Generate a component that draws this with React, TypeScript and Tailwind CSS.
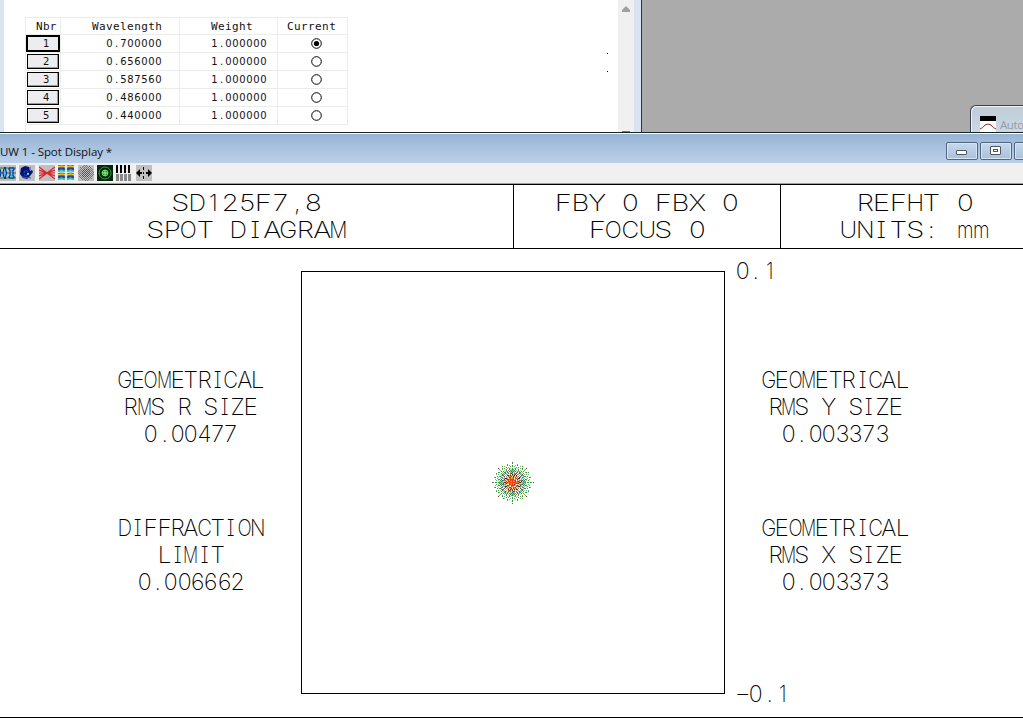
import { ReactNode } from "react";

const wavelengths = ["0.700000", "0.656000", "0.587560", "0.486000", "0.440000"];

// Horizontal stretch of the plotter letters, so that they fill equal cells
const stretchOf = (char: string) => {
  if ("MW".includes(char)) return 0.68;
  if (char === "m") return 0.64;
  if ("OQ".includes(char)) return 0.76;
  if ("NGCDHU".includes(char)) return 0.82;
  if ("1.,:I".includes(char)) return 0.8;
  if (char === "-") return 1.5;
  if ("LEFS".includes(char)) return 0.98;
  return 0.93;
};

type CellsProps = { text: string; cell: string; stretch?: number };

const Cells = ({ text, cell, stretch }: CellsProps) => (
  <span className="inline-flex whitespace-pre">
    {text.split("").map((char, i) => (
      <span
        key={i}
        className={`flex justify-center shrink-0 ${cell}`}
        style={stretch ? { transform: `scaleX(${stretch * stretchOf(char)})` } : undefined}
      >
        {char}
      </span>
    ))}
  </span>
);

const HeaderText = ({ lines }: { lines: string[] }) => (
  <div className="flex flex-col items-center pt-1">
    {lines.map((line) => (
      <div key={line} className="h-[27px] leading-[27px]">
        <Cells text={line} cell="w-[16.7px]" stretch={1.32} />
      </div>
    ))}
  </div>
);

const Block = ({ lines }: { lines: string[] }) => (
  <div className="flex flex-col items-center">
    {lines.map((line) => (
      <div key={line} className="h-[27px] leading-[27px]">
        <Cells text={line} cell="w-[13.35px]" stretch={1.1} />
      </div>
    ))}
  </div>
);

const Radio = ({ checked }: { checked: boolean }) => (
  <svg width="11" height="11" viewBox="0 0 11 11">
    <circle cx="5.5" cy="5.5" r="4.8" fill="#fff" stroke="#000" />
    {checked && <circle cx="5.5" cy="5.5" r="2.6" />}
  </svg>
);

const WavelengthTable = () => (
  <div className="w-[323px] border-t border-l border-[#e9eeeb] font-['DejaVu_Sans_Mono',monospace] text-[11px] text-[#111]">
    <div className="flex h-[17px] leading-[18px] border-b border-[#e9eeeb] [&>div]:border-r [&>div]:border-[#e9eeeb]">
      <div className="w-[35px] pl-[10px] tracking-[0.3px]">Nbr</div>
      <div className="w-[119px] pl-[31px] tracking-[0.4px]">Wavelength</div>
      <div className="w-[98px] pl-[31px] tracking-[0.4px]">Weight</div>
      <div className="w-[70px] pl-[9px] tracking-[0.4px]">Current</div>
    </div>
    {wavelengths.map((value, i) => (
      <div
        key={value}
        className="flex h-[18px] leading-[18px] font-['DejaVu_Sans',sans-serif] text-[10px] border-b border-[#e9eeeb] [&>div]:border-r [&>div]:border-[#e9eeeb]"
      >
        <div className="w-[35px] flex items-center justify-center">
          <span
            className={`shrink-0 border-black bg-[#ededf0] ${
              i === 0
                ? "w-[34px] h-[17px] leading-[14px] pl-[15px] border-2"
                : "w-8 h-[15px] leading-[14px] pl-[15px] border shadow-[inset_-1px_-1px_0_#999]"
            }`}
          >
            {i + 1}
          </span>
        </div>
        <div className="w-[119px] flex justify-end pr-[17px]">
          <Cells text={value} cell="w-[7px]" />
        </div>
        <div className="w-[98px] flex justify-end pr-[10px]">
          <Cells text="1.000000" cell="w-[7px]" />
        </div>
        <div className="w-[70px] flex items-center justify-center pl-2">
          <Radio checked={i === 0} />
        </div>
      </div>
    ))}
  </div>
);

const Icon = ({ children, bg = "#c0c0c0" }: { children: ReactNode; bg?: string }) => (
  <svg width="16" height="16" viewBox="0 0 16 16" className="shrink-0">
    <rect width="16" height="16" fill={bg} />
    {children}
  </svg>
);

const dots: [number, number][] = [];
for (let y = 0; y < 16; y += 1) {
  for (let x = y % 2; x < 16; x += 2) {
    if (Math.hypot(x - 7.5, y - 7.5) < 7.8) dots.push([x, y]);
  }
}

const fringes = ["#2f8f46", "#e7d72d", "#d9621f", "#1e3ba0", "#1e3ba0", "#38b2be", "#38b2be", "#e9efdc"];

const Toolbar = () => (
  <div className="grid grid-cols-[19px_20px_19px_20px_19px_19px_20px_16px] h-[20px] pt-[2px] bg-[#f0f0f0]">
    <Icon>
      <path d="M0 3h16M0 8h16M0 13h16" stroke="#207c37" />
      <path d="M0 4q2 4 0 8M5 2q-4 6 0 12q3-6 0-12M9 3h5v2h-1v6h1v2H9v-2h1V5H9z" fill="#41c5f2" stroke="#081b80" />
    </Icon>
    <Icon>
      <path d="M2 3l4-2 4 1 1 4 2-1 1 2-3 4-3 3-4-1-3-4z" fill="#07136f" />
      <path d="M5 8c0-3 4-3 4 0s-3 4-4 1M3 12l9 1M11 2v3" fill="none" stroke="#2457df" />
      <path d="M8 8h2v2H8z" fill="#65c9f6" />
    </Icon>
    <Icon>
      <path d="M0 2l8 6-8 6M0 5l16 6M0 11l16-6M16 2L8 8l8 6M0 8h16" fill="none" stroke="#e0242d" strokeWidth="1.2" />
    </Icon>
    <Icon bg="#e9efdc">
      {[0, 9].map((x) =>
        [0, 8].map((top) =>
          fringes.map((colour, i) => (
            <path
              key={`${x}-${top}-${i}`}
              d={`M${x} ${top + i + 1}q3.5 -1.6 7 0`}
              fill="none"
              stroke={colour}
              strokeWidth="1.3"
            />
          ))
        )
      )}
    </Icon>
    <Icon>
      {dots.map(([x, y]) => (
        <rect
          key={`${x}-${y}`}
          x={x}
          y={y}
          width="1"
          height="1"
          fill={Math.hypot(x - 7.5, y - 7.5) < 4.5 ? "#07679b" : "#b85a62"}
        />
      ))}
    </Icon>
    <Icon bg="#06270d">
      <circle cx="8" cy="8" r="6" fill="none" stroke="#2a9e37" />
      <circle cx="8" cy="8" r="3" fill="#24962f" stroke="#58d363" />
      <path d="M8 5v6M5 8h6" stroke="#a4f078" />
    </Icon>
    <Icon bg="#ededed">
      <path d="M1 0v8M5 0v8M9 0v8M13 0v8" stroke="#000" strokeWidth="2" />
      <path d="M1.5 9v7M5.5 9v7M9.5 9v7M13.5 9v7" stroke="#888" strokeWidth="3" />
    </Icon>
    <Icon>
      <path d="M0 8l4-4v3h2v2H4v3zM16 8l-4-4v3h-2v2h2v3zM7 2h1v3H7zM7 7h1v2H7zM7 11h1v3H7z" />
    </Icon>
  </div>
);

// Hexapolar ray spots: each ring is [radius, number of rays, colours]
const rings: [number, number, string[]][] = [
  [20.5, 8, ["#278a25", "#7f2c2c"]],
  [19, 24, ["#2fa32f", "#55b650"]],
  [17.5, 40, ["#239328", "#72bd65"]],
  [16, 48, ["#2fa32f", "#63b78c", "#48a54b"]],
  [14.5, 56, ["#3da33f", "#9fd09a"]],
  [13, 56, ["#279b55", "#91c2a0", "#7b6340", "#58ad72"]],
  [12, 64, ["#46aa86", "#a8cfcd", "#3b8e39", "#8cc4a5"]],
  [11, 64, ["#84b9ae", "#318d68", "#d2bb8a", "#4d6286"]],
  [10, 56, ["#c5a468", "#7fbfa5", "#405a78", "#e0dcc0"]],
  [9, 48, ["#b59554", "#e5ddbb", "#437c7c", "#364565"]],
  [8, 48, ["#26304e", "#edc65a", "#8a8b76", "#f3eedb"]],
  [7, 40, ["#26304e", "#e9c87a", "#c06034", "#8fa0a8"]],
  [6, 40, ["#e7942c", "#65404b", "#fae284", "#33405a"]],
  [5, 32, ["#e7942c", "#a6442d", "#fae284"]],
  [4, 24, ["#f27a20", "#e23420", "#f9ab33"]],
  [2.5, 16, ["#ef3518", "#ff6522"]],
  [1, 8, ["#f5401a", "#ffa038"]],
];

const Spot = () => (
  <svg width="44" height="44" viewBox="-22 -22 44 44" shapeRendering="crispEdges" className="-mt-px -ml-[3px]">
    <circle r="4" fill="#ee3e1b" />
    {rings.map(([radius, count, colours]) =>
      Array.from({ length: count }, (_, i) => {
        const angle = (i * 2 * Math.PI) / count;
        return (
          <rect
            key={`${radius}-${i}`}
            x={Math.round(radius * Math.cos(angle))}
            y={Math.round(radius * Math.sin(angle))}
            width="1"
            height="1"
            fill={colours[i % colours.length]}
          />
        );
      })
    )}
  </svg>
);

const TopPane = () => (
  <div className="flex h-[132px] bg-[#ababab] overflow-hidden">
    <div className="w-1 bg-[#d9e4f1]" />
    <div className="w-[614px] bg-white pl-[21px] pt-[17px] flex">
      <WavelengthTable />
      <div className="ml-[259px] pt-9 flex flex-col gap-[17px]">
        <div className="size-px bg-black" />
        <div className="size-px bg-black" />
      </div>
    </div>
    <div className="w-4 bg-[#f0f0f0] flex flex-col items-center justify-between pt-[6px]">
      <svg width="8" height="6" viewBox="0 0 8 6">
        <path d="M4 0l4 4v2H0V4z" fill="#a0a0a0" />
      </svg>
      <div className="w-2 h-px bg-[#777]" />
    </div>
    <div className="w-[7px] bg-[#d8e4f1]" />
    <div className="w-px bg-[#333]" />
    {/* Minimised window behind */}
    <div className="ml-auto mt-[105px] w-[53px] h-[40px] border-t border-l border-[#39424d] rounded-tl-[6px] bg-linear-to-b from-[#bdccd9] to-[#d3dfe9] flex pl-[9px] pt-[10px] gap-1 shadow-[inset_1px_1px_0_#eef4f8]">
      <svg width="16" height="16" viewBox="0 0 16 16" className="shrink-0">
        <rect width="16" height="16" fill="#fff" />
        <rect width="16" height="5" fill="#000" />
        <path d="M0 13q3-1 5-4 3-2 6 0 2 3 5 4" fill="none" stroke="#98302d" />
      </svg>
      <span className="font-['Open_Sans',sans-serif] text-[11.5px] tracking-[-0.4px] leading-[18px] text-[#929ba3]">Auto</span>
    </div>
  </div>
);

const CaptionButton = ({ children }: { children?: ReactNode }) => (
  <div className="shrink-0 w-8 h-[18px] border border-[#53687f] rounded-[2px] bg-linear-to-b from-[#c6d8eb] to-[#a9c1dc] shadow-[inset_0_0_0_1px_#d7e5f2] flex items-center justify-center">
    {children}
  </div>
);

const TitleBar = () => (
  <div className="flex h-[29px] bg-linear-to-b from-[#98b4d5] to-[#bad1e9] overflow-hidden">
    <div className="w-[946px] shrink-0 font-['Open_Sans',sans-serif] text-[11.5px] leading-[35px] tracking-[-0.08px] text-[#111]">
      UW 1 - Spot Display *
    </div>
    <div className="flex gap-[2px] pt-2">
      <CaptionButton>
        <div className="w-[11px] h-[5px] mt-[2px] -ml-px bg-white border border-[#4e5761] rounded-[1px]" />
      </CaptionButton>
      <CaptionButton>
        <div className="w-[11px] h-[9px] -mt-px -ml-px bg-white border border-[#4e5761] rounded-[1px] flex items-center justify-center">
          <div className="w-[5px] h-[3px] border border-[#4e5761]" />
        </div>
      </CaptionButton>
      <CaptionButton />
    </div>
  </div>
);

export default function App() {
  return (
    <div className="w-[1023px] h-[718px] overflow-hidden bg-white flex flex-col">
      <TopPane />
      <div className="h-px bg-[#17231c]" />
      <div className="h-px bg-white" />
      <TitleBar />
      <Toolbar />
      <div className="h-px bg-[#a0a0a0]" />
      <div className="h-[534px] border-y border-black flex flex-col text-black font-['Inter',sans-serif] font-[200] text-[22.5px] [font-feature-settings:'cv08']">
        <div className="flex h-16 border-b border-black">
          <div className="w-[514px] shrink-0 pr-[19px] border-r border-black">
            <HeaderText lines={["SD125F7,8", "SPOT DIAGRAM"]} />
          </div>
          <div className="w-[267px] shrink-0 border-r border-black">
            <HeaderText lines={["FBY 0 FBX 0", "FOCUS 0"]} />
          </div>
          <div className="w-[268px] shrink-0">
            <HeaderText lines={["REFHT 0", "UNITS: mm"]} />
          </div>
        </div>
        <div className="flex pt-[22px]">
          <div className="w-[301px] pl-[81px] pt-[95px] flex flex-col gap-[67px]">
            <Block lines={["GEOMETRICAL", "RMS R SIZE", "0.00477"]} />
            <Block lines={["DIFFRACTION", "LIMIT", "0.006662"]} />
          </div>
          <div className="w-[424px] h-[423px] border border-black flex items-center justify-center">
            <Spot />
          </div>
          <div className="flex flex-col -mt-[14px] w-[298px]">
            <div className="pl-[11px] leading-[27px] h-[27px]">
              <Cells text="0.1" cell="w-[13.35px]" stretch={1.1} />
            </div>
            <div className="pr-[77px] pt-[82px] flex flex-col gap-[67px]">
              <Block lines={["GEOMETRICAL", "RMS Y SIZE", "0.003373"]} />
              <Block lines={["GEOMETRICAL", "RMS X SIZE", "0.003373"]} />
            </div>
            <div className="pl-[11px] mt-[85px] leading-[27px] h-[27px]">
              <Cells text="-0.1" cell="w-[13.35px]" stretch={1.1} />
            </div>
          </div>
        </div>
      </div>
    </div>
  );
}
